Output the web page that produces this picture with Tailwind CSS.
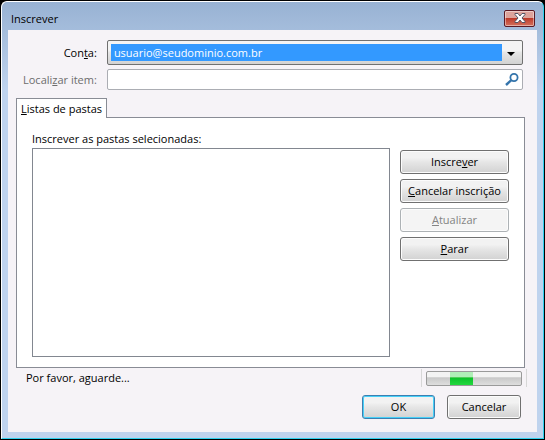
<!DOCTYPE html>
<html lang="pt-BR">
<head>
  <meta charset="UTF-8">
  <meta name="viewport" content="width=device-width, initial-scale=1.0">
  <title>Inscrever</title>
  <script src="https://cdn.jsdelivr.net/npm/@tailwindcss/browser@4"></script>
</head>
<body class="bg-black font-['Open_Sans','Noto_Sans',sans-serif] text-[11px] leading-4 text-black">
  <div class="min-h-screen flex flex-col rounded-t-md border border-black">
    <div class="grow flex flex-col rounded-t-md border border-t-white border-l-white border-r-[#2fd0ee] border-b-[#2fd0ee] bg-[#bfd3ee] bg-linear-to-b from-[#98b2d3] to-[#bfd3ee] to-20% px-[6px] pb-[6px]">
      <header class="h-7 flex items-center justify-between pl-[3px] pr-[2px]">
        <h1 class="pt-[6px]">Inscrever</h1>
        <button type="button" aria-label="Fechar" class="mt-1 w-[31px] h-[17px] flex items-center justify-center rounded-xs border border-[#5a1a24] bg-linear-to-b from-[#dda39b] from-45% via-[#bd3a2a] via-50% to-[#d4705c] shadow-[inset_0_0_0_1px_#ffffff70]">
          <svg width="12" height="10" viewBox="0 0 12 10"><path d="M1 .5h3L6 3 8 .5h3v1L8 5l3 3.500v1H8L6 7 4 9.500H1v-1L4 5 1 1.500z" fill="#fff" stroke="#535666"/></svg>
        </button>
      </header>

      <main class="grow flex flex-col bg-[#f6f3f7] px-2 pt-[10px]">
        <form class="grid grid-cols-[auto_1fr] gap-x-[10px] gap-y-1 items-center pl-[7px] pr-[6px]">
          <label for="conta" class="text-right">Con<u>t</u>a:</label>
          <div class="relative h-[25px] rounded-xs border border-[#707070] bg-linear-to-b from-[#f4f4f4] from-40% via-[#e6e6e6] via-50% to-[#d2d2d2] p-[3px] pr-5">
            <select id="conta" class="block w-full h-[17px] appearance-none bg-[#3399ff] text-white pl-[3px] leading-4 outline-none">
              <option>usuario@seudominio.com.br</option>
            </select>
            <svg class="absolute right-[7px] top-[11px] pointer-events-none" width="8" height="4" viewBox="0 0 8 4"><path d="M0 0h8L4 4z" fill="#000"/></svg>
          </div>
          <label for="localizar" class="text-right text-[#6d6d6d]">Locali<u>z</u>ar item:</label>
          <div class="flex items-center h-[21px] rounded-xs border border-[#abadb3] bg-white pr-[3px]">
            <input type="text" id="localizar" class="grow min-w-0 px-1 outline-none">
            <svg width="14" height="14" viewBox="0 0 14 14" fill="none" stroke="#3474ab"><circle cx="9" cy="4.500" r="3.600" stroke-width="1.800"/><path d="M6.300 7.200L1 12" stroke-width="2.400"/></svg>
          </div>
        </form>

        <div role="tablist" class="mt-2 flex">
          <button type="button" role="tab" aria-selected="true" class="relative w-[91px] h-5 -mb-px border border-b-0 border-[#898c95] bg-white"><u>L</u>istas de pastas</button>
        </div>
        <section class="grow flex flex-col border border-[#898c95] bg-white px-[15px] pt-[13px] pb-[10px] mr-1">
          <label for="pastas" class="mb-px">Inscrever as pastas selecionadas:</label>
          <div class="grow flex gap-[10px]">
            <select id="pastas" size="8" class="grow min-w-0 border border-[#828790] bg-white outline-none"></select>
            <div class="w-[109px] flex flex-col gap-[5px] pt-[2px]">
              <button type="button" class="h-6 rounded-[3px] border border-[#707070] bg-linear-to-b from-[#f2f2f2] from-30% via-[#e6e6e6] via-50% to-[#d2d2d2] shadow-[inset_0_0_0_1px_#fcfcfc]">Inscre<u>v</u>er</button>
              <button type="button" class="h-6 whitespace-nowrap rounded-[3px] border border-[#707070] bg-linear-to-b from-[#f2f2f2] from-30% via-[#e6e6e6] via-50% to-[#d2d2d2] shadow-[inset_0_0_0_1px_#fcfcfc]"><u>C</u>ancelar inscrição</button>
              <button type="button" disabled class="h-6 rounded-[3px] border border-[#adb2b5] bg-[#f4f4f4] text-[#838383] shadow-[inset_0_0_0_1px_#fcfcfc]"><u>A</u>tualizar</button>
              <button type="button" class="h-6 rounded-[3px] border border-[#707070] bg-linear-to-b from-[#f2f2f2] from-30% via-[#e6e6e6] via-50% to-[#d2d2d2] shadow-[inset_0_0_0_1px_#fcfcfc]"><u>P</u>arar</button>
            </div>
          </div>
        </section>

        <footer class="pt-px pb-[13px] pl-[10px] pr-[2px]">
          <div class="h-[18px] flex items-center justify-between">
            <span role="status">Por favor, aguarde...</span>
            <div class="h-full flex items-center border-x border-[#d7d7d7] px-1">
              <div role="progressbar" aria-label="Carregando" class="w-24 h-[15px] rounded-xs border border-[#9a9a9a] bg-linear-to-b from-[#f3f3f3] from-35% via-[#c9c9c9] via-45% to-[#dedede] pl-[23px]">
                <div class="w-[23px] h-full bg-linear-to-b from-[#b0efb8] from-35% via-[#0ac12a] via-45% to-[#22d83e]"></div>
              </div>
            </div>
          </div>
          <div class="mt-2 flex justify-end gap-3 pr-[6px]">
            <button type="button" class="w-[73px] h-6 rounded-[3px] border border-[#3c7fb1] bg-linear-to-b from-[#f2f2f2] from-30% via-[#e6e6e6] via-50% to-[#d2d2d2] shadow-[inset_0_0_0_1px_#46d0f8]">OK</button>
            <button type="button" class="w-[74px] h-6 rounded-[3px] border border-[#707070] bg-linear-to-b from-[#f2f2f2] from-30% via-[#e6e6e6] via-50% to-[#d2d2d2] shadow-[inset_0_0_0_1px_#fcfcfc]">Cancelar</button>
          </div>
        </footer>
      </main>
    </div>
  </div>
</body>
</html>
